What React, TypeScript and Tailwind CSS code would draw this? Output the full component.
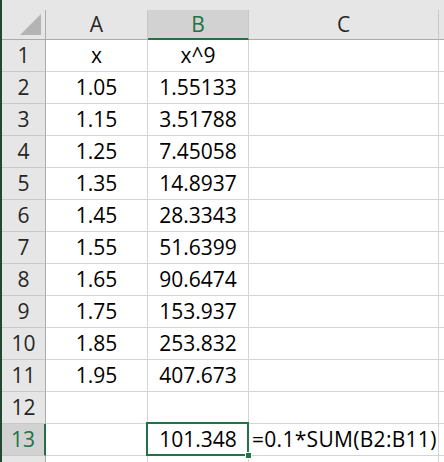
import React from "react";

const rows: [string, string][] = [
  ["x", "x^9"],
  ["1.05", "1.55133"],
  ["1.15", "3.51788"],
  ["1.25", "7.45058"],
  ["1.35", "14.8937"],
  ["1.45", "28.3343"],
  ["1.55", "51.6399"],
  ["1.65", "90.6474"],
  ["1.75", "153.937"],
  ["1.85", "253.832"],
  ["1.95", "407.673"],
  ["", ""],
];

const font = { fontFamily: '"Open Sans", "Liberation Sans", sans-serif' };

function RowHeader({ n, active }: { n: number; active?: boolean }) {
  return (
    <div
      className={
        "h-[32px] flex items-center justify-center border-b border-[#c8c8c8] " +
        (active
          ? "bg-[#d2d2d2] text-[#217346] border-r-2 border-r-[#217346]"
          : "bg-[#e6e6e6] text-[#262626] border-r border-r-[#ababab]")
      }
    >
      {n}
    </div>
  );
}

function Cell({ children, left }: { children?: React.ReactNode; left?: boolean }) {
  return (
    <div
      className={
        "h-[32px] flex items-center border-b border-r border-[#d4d4d4] text-black whitespace-nowrap " +
        (left ? "justify-start pl-[3px] tracking-[0.3px]" : "justify-center")
      }
    >
      {children}
    </div>
  );
}

export default function App() {
  return (
    <div className="w-[444px] h-[462px] overflow-hidden bg-white flex text-[21px] leading-none" style={font}>
      <div className="w-[2px] h-full bg-[#1f4a2c] shrink-0" />
      <div className="flex-1">
        <div className="h-[10px] bg-[#e6e6e6]" />
        <div className="grid grid-cols-[44px_102px_101px_190px_5px]">
          {/* column headers */}
          <div className="h-[30px] bg-[#e6e6e6] border-b border-r border-[#ababab] relative">
            <div
              className="absolute right-[4px] bottom-[4px] w-[21px] h-[21px] bg-[#b4b4b4]"
              style={{ clipPath: "polygon(100% 0, 100% 100%, 0 100%)" }}
            />
          </div>
          <div className="h-[30px] bg-[#e6e6e6] border-b border-r border-b-[#ababab] border-r-[#c8c8c8] flex items-center justify-center text-[#262626]">
            A
          </div>
          <div className="h-[30px] bg-[#d2d2d2] border-b-2 border-b-[#217346] border-r border-r-[#c8c8c8] flex items-center justify-center text-[#217346] pt-[1px]">
            B
          </div>
          <div className="h-[30px] bg-[#e6e6e6] border-b border-r border-b-[#ababab] border-r-[#c8c8c8] flex items-center justify-center text-[#262626]">
            C
          </div>
          <div className="h-[30px] bg-[#e6e6e6] border-b border-[#ababab]" />

          {rows.map(([a, b], i) => (
            <React.Fragment key={i}>
              <RowHeader n={i + 1} />
              <Cell>{a}</Cell>
              <Cell>{b}</Cell>
              <Cell />
              <div className="h-[32px] border-b border-[#d4d4d4]" />
            </React.Fragment>
          ))}

          {/* row 13 with selected cell */}
          <RowHeader n={13} active />
          <Cell />
          <div className="h-[32px] border-b border-r border-[#d4d4d4] relative flex items-center justify-center text-black">
            <div className="absolute -top-[2px] -left-[2px] -right-[1px] -bottom-[1px] border-2 border-[#217346] pointer-events-none" />
            <div className="absolute -right-[4px] -bottom-[4px] w-[7px] h-[7px] bg-[#217346] border border-white" />
            101.348
          </div>
          <Cell left>=0.1*SUM(B2:B11)</Cell>
          <div className="h-[32px] border-b border-[#d4d4d4]" />

          {/* partial row 14 */}
          <div className="h-[32px] bg-[#e6e6e6] border-r border-[#ababab]" />
          <div className="h-[32px] border-r border-[#d4d4d4]" />
          <div className="h-[32px] border-r border-[#d4d4d4]" />
          <div className="h-[32px] border-r border-[#d4d4d4]" />
          <div className="h-[32px]" />
        </div>
      </div>
    </div>
  );
}
